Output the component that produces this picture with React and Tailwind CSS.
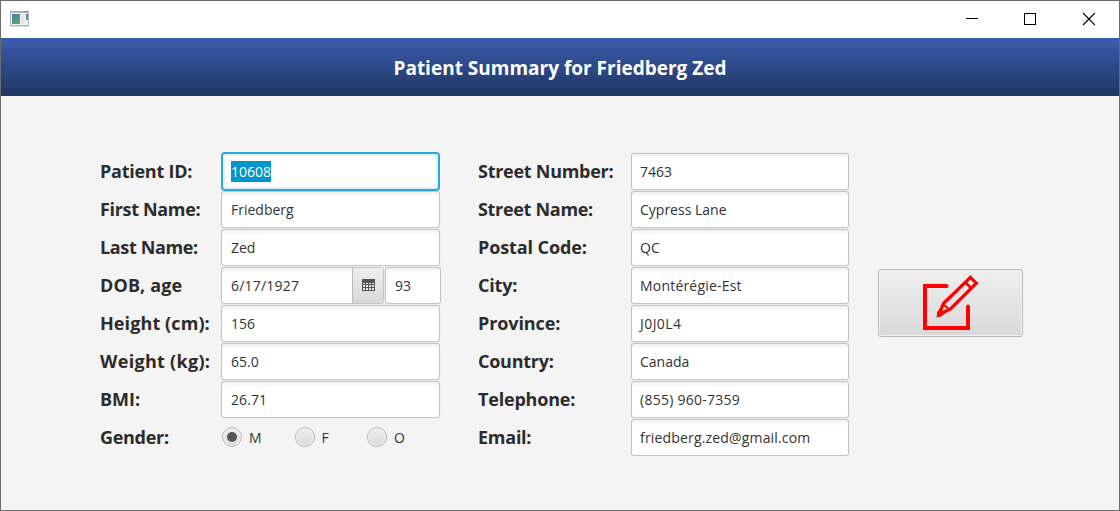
import React from "react";

const FIELD =
  "flex h-[37px] items-center rounded-[3px] border border-[#c4c4c4] bg-white bg-[linear-gradient(to_bottom,#efefef_0px,#ffffff_5px)] px-2 text-[#333333] shadow-[0_0_1px_rgba(0,0,0,0.12)]";

function Text({ children, className = "" }) {
  return (
    <span className={`whitespace-pre text-[14px] leading-[20px] ${className}`}>{children}</span>
  );
}

function Row({ label, spacing = "", fieldWidth = "w-[219px]", children }) {
  return (
    <div className="flex h-[38px] items-center">
      <span
        className={`w-full whitespace-pre pb-px text-[18px] font-bold leading-[24px] text-[#2c2c2c] ${spacing}`}
      >
        {label}
      </span>
      <div className={`${fieldWidth} shrink-0`}>{children}</div>
    </div>
  );
}

function Field({ value, spacing = "", inset = "pl-[9px]" }) {
  return (
    <div className={`${FIELD} ${inset}`}>
      <Text className={`pt-px ${spacing}`}>{value}</Text>
    </div>
  );
}

function Radio({ label, checked }) {
  return (
    <div className="flex w-[72.5px] items-center gap-[7px]">
      <span className="flex size-5 items-center justify-center rounded-full border border-[#b8b8b8] bg-linear-to-b from-[#f0f0f0] to-[#dadada] shadow-[inset_0_0_0_1px_#f4f4f4]">
        {checked && <span className="size-[10px] rounded-full bg-[#555555]" />}
      </span>
      <Text className="pt-px text-[#333333]">{label}</Text>
    </div>
  );
}

function CalendarIcon() {
  return (
    <svg width="13" height="12" viewBox="0 0 13 12" shapeRendering="crispEdges">
      <path fill="#555" d="M0 0h13v12H0z" />
      <path
        fill="#e8e8e8"
        d="M1 4h2v1H1zM4 4h2v1H4zM7 4h2v1H7zM10 4h2v1h-2zM1 6h2v2H1zM4 6h2v2H4zM7 6h2v2H7zM10 6h2v2h-2zM1 9h2v2H1zM4 9h2v2H4zM7 9h2v2H7zM10 9h2v2h-2z"
      />
    </svg>
  );
}

function AppIcon() {
  return (
    <svg width="19" height="16" viewBox="0 0 19 16">
      <defs>
        <linearGradient id="pane" x1="0" y1="0" x2="0.5" y2="1">
          <stop stopColor="#4777ae" />
          <stop offset="1" stopColor="#52ad72" />
        </linearGradient>
      </defs>
      <path fill="#b0b3b6" d="M0 0h19v15H0z" />
      <path fill="#888b8e" d="M14 0h4v1h-4z" />
      <path fill="#f8f8f8" d="M1 2h17v12H1z" />
      <path fill="url(#pane)" d="M2 3h8v10H2z" />
      <path fill="#e8e8e8" d="M11 3h4v10h-4z" />
      <path fill="url(#pane)" d="M16 3h2v6h-2z" />
      <path fill="#dedede" d="M0 15h19v1H0z" />
    </svg>
  );
}

function EditIcon() {
  return (
    <svg width="58" height="57" viewBox="0 0 58 57" fill="none" stroke="#ff0000">
      <path strokeWidth="4" strokeLinecap="round" d="M24.5 12H3V54H46V32.5" />
      <path strokeWidth="3.2" d="M48.5 3.3L54.3 9.2L28.5 35L17 40.5L21.5 29.5Z" />
      <path strokeWidth="2.6" d="M43.5 8.5L49.5 14.5" />
      <path strokeWidth="2.2" d="M21 30L28 36" />
      <path fill="#ff0000" stroke="none" d="M15 43V38.5L18 34L23.5 39L19.5 42.5Z" />
    </svg>
  );
}

export default function App() {
  return (
    <div className="flex h-[511px] w-[1120px] flex-col overflow-hidden border border-[#6b6b6b] bg-[#f4f4f4] font-['Open_Sans','Noto_Sans',sans-serif]">
      <div className="flex h-[37px] shrink-0 items-start justify-between bg-white pl-[9px] pr-[24px] pt-[10px]">
        <AppIcon />
        <svg width="129" height="16" viewBox="0 0 129 16" fill="none" stroke="#000">
          <path d="M0 7.5h12M58.5 2.5h11v11h-11z" shapeRendering="crispEdges" />
          <path strokeWidth="1.2" d="M117 2l12 12M129 2l-12 12" />
        </svg>
      </div>
      <header className="flex h-[58px] shrink-0 items-center justify-center bg-linear-to-b from-[#3a5dae] to-[#203562]">
        <h1 className="whitespace-pre pt-px text-[19px] font-bold leading-[26px] text-white">
          Patient Summary for Friedberg Zed
        </h1>
      </header>
      <main className="flex items-start pl-[99px] pt-[56px]">
        <div className="w-[340px]">
          <Row label="Patient ID:" spacing="tracking-[-0.25px]">
            <div className="mt-px flex h-[39px] items-center rounded-[4px] border-2 border-[#2ba9d6] bg-white px-[8px] shadow-[inset_0_0_0_2px_#e2f2f9]">
              <Text className="h-[21px] bg-[#0096c9] pt-px text-white">10608</Text>
            </div>
          </Row>
          <Row label="First Name:" spacing="tracking-[-0.33px]"><Field value="Friedberg" /></Row>
          <Row label="Last Name:" spacing="tracking-[-0.37px]"><Field value="Zed" /></Row>
          <Row label="DOB, age" spacing="tracking-[0.12px]">
            <div className="flex gap-px">
              <div className={`${FIELD} w-[163px] shrink-0 justify-between pr-0 pl-[9px]`}>
                <Text className="pt-px tracking-[0.2px]">6/17/1927</Text>
                <span className="flex h-[35px] w-[31px] items-center justify-center border-l border-[#bdbdbd] bg-linear-to-b from-[#eeeeee] to-[#d8d8d8]">
                  <CalendarIcon />
                </span>
              </div>
              <div className={`${FIELD} w-[56px] shrink-0 pl-[9px]`}>
                <Text className="pt-px">93</Text>
              </div>
            </div>
          </Row>
          <Row label="Height (cm):" spacing="tracking-[0.1px]"><Field value="156" /></Row>
          <Row label="Weight (kg):" spacing="tracking-[0.3px]"><Field value="65.0" /></Row>
          <Row label="BMI:"><Field value="26.71" spacing="tracking-[0.1px]" /></Row>
          <Row label="Gender:" spacing="tracking-[-0.3px]">
            <div className="flex pl-px">
              <Radio label="M" checked />
              <Radio label="F" />
              <Radio label="O" />
            </div>
          </Row>
        </div>
        <div className="ml-[38px] w-[371px]">
          <Row fieldWidth="w-[218px]" label="Street Number:" spacing="tracking-[-0.27px]"><Field inset="pl-2" value="7463" /></Row>
          <Row fieldWidth="w-[218px]" label="Street Name:" spacing="tracking-[-0.31px]"><Field inset="pl-2" value="Cypress Lane" /></Row>
          <Row fieldWidth="w-[218px]" label="Postal Code:" spacing="tracking-[-0.1px]"><Field inset="pl-2" value="QC" /></Row>
          <Row fieldWidth="w-[218px]" label="City:" spacing="tracking-[-0.2px]"><Field inset="pl-2" value="Montérégie-Est" spacing="tracking-[0.2px]" /></Row>
          <Row fieldWidth="w-[218px]" label="Province:" spacing="tracking-[-0.1px]"><Field inset="pl-2" value="J0J0L4" spacing="tracking-[0.45px]" /></Row>
          <Row fieldWidth="w-[218px]" label="Country:" spacing="tracking-[-0.25px]"><Field inset="pl-2" value="Canada" /></Row>
          <Row fieldWidth="w-[218px]" label="Telephone:" spacing="tracking-[-0.2px]"><Field inset="pl-2" value="(855) 960-7359" spacing="tracking-[0.25px]" /></Row>
          <Row fieldWidth="w-[218px]" label="Email:" spacing="tracking-[-0.25px]"><Field inset="pl-2" value="friedberg.zed@gmail.com" spacing="tracking-[0.17px]" /></Row>
        </div>
        <button
          aria-label="Edit"
          className="ml-[29px] mt-[117px] flex h-[68px] w-[145px] items-start rounded-[3px] border border-[#bababa] bg-linear-to-b from-[#efefef] to-[#d9d9d9] pl-[43px] pt-[4px] shadow-[inset_0_0_0_1px_#f3f3f3]"
        >
          <EditIcon />
        </button>
      </main>
    </div>
  );
}
